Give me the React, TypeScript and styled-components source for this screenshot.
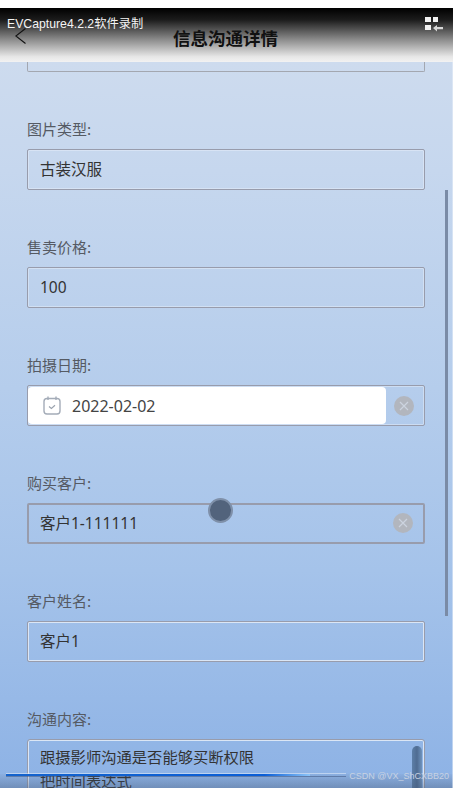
import { createGlobalStyle } from "styled-components";
import styled from "styled-components";

const GlobalStyle = createGlobalStyle`
	html, body {
		margin: 0;
		padding: 0;
		background: #fff;
	}
	* {
		box-sizing: border-box;
	}
`;

function CalendarIcon() {
	return (
		<svg width="18" height="19" viewBox="0 0 18 19" fill="none" stroke="#a4acb8" strokeWidth="1.4">
			<rect x="1" y="2.5" width="16" height="15.5" rx="3" />
			<path d="M5 0.5v3.5M13 0.5v3.5" />
			<path d="M6 10.5l2.4 2 3.6-3.2" stroke="#9aa2ae" strokeWidth="1.2" />
		</svg>
	);
}

function ClearIcon() {
	return (
		<ClearCircle>
			<svg width="10" height="10" viewBox="0 0 10 10" stroke="#ccd3df" strokeWidth="1.2">
				<path d="M1 1l8 8M9 1l-8 8" />
			</svg>
		</ClearCircle>
	);
}

function App() {
	return (
		<Page>
			<GlobalStyle />
			<Header>
				<BackIcon width="11" height="16" viewBox="0 0 11 16" fill="none" stroke="#111" strokeWidth="1.1">
					<path d="M10.5 0.5L0.8 8l9.7 7.5" />
				</BackIcon>
				<Title>信息沟通详情</Title>
				<RecorderText>EVCapture4.2.2软件录制</RecorderText>
				<RecorderIcon width="18" height="16" viewBox="0 0 18 16" fill="#f2f2f2">
					<rect x="0" y="0" width="6" height="5" />
					<rect x="8" y="0" width="5" height="5" />
					<rect x="0" y="8" width="6" height="5" />
					<path fill="#d8d8d8" d="M8 11L12 8v2h6v2.2h-6v2.4z" />
				</RecorderIcon>
			</Header>
			<Content>
				<CutOffBox />
				<Field>
					<Label>图片类型:</Label>
					<InputBox>古装汉服</InputBox>
				</Field>
				<Field>
					<Label>售卖价格:</Label>
					<InputBox>100</InputBox>
				</Field>
				<Field>
					<Label>拍摄日期:</Label>
					<InputBox $variant="date">
						<DateValue>
							<CalendarIcon />
							<span>2022-02-02</span>
						</DateValue>
						<ClearIcon />
					</InputBox>
				</Field>
				<Field>
					<Label>购买客户:</Label>
					<InputBox $variant="focus">
						<ValueText>客户1-111111</ValueText>
						<ClearIcon />
					</InputBox>
				</Field>
				<Field>
					<Label>客户姓名:</Label>
					<InputBox $variant="light">客户1</InputBox>
				</Field>
				<Field>
					<Label>沟通内容:</Label>
					<TextArea>
						<p>跟摄影师沟通是否能够买断权限</p>
						<p>把时间表达式</p>
					</TextArea>
				</Field>
			</Content>
			<PageScrollbar />
			<TextScrollbar />
			<TouchDot />
			<BottomShade />
			<ProgressTrack>
				<ProgressFill />
			</ProgressTrack>
			<Watermark>CSDN @VX_ShCXBB20</Watermark>
			<EdgeLine />
		</Page>
	);
}
export default App;

const Page = styled.div`
	position: relative;
	width: 453px;
	height: 788px;
	overflow: hidden;
	padding-top: 8px;
	background: #fff;
	font-family: "Noto Sans", "Noto Sans CJK SC", sans-serif;
`;
const Header = styled.div`
	position: relative;
	height: 54px;
	display: flex;
	align-items: center;
	justify-content: center;
	background: linear-gradient(to bottom, #000 0%, #1c1c1c 22%, #8a8a8a 58%, #e6e6e6 90%, #f2f2f2 100%);
`;
const Title = styled.div`
	margin: 5px 2px 0 0;
	font-size: 17.5px;
	font-weight: 700;
	color: #111;
	font-family: "Noto Sans CJK SC", sans-serif;
`;
const BackIcon = styled.svg`
	position: absolute;
	left: 15px;
	top: 20px;
`;
const RecorderText = styled.div`
	position: absolute;
	left: 7px;
	top: 8px;
	font-size: 12.25px;
	line-height: 17px;
	color: #f4f4f4;
	font-family: "Liberation Sans", "Noto Sans CJK SC", sans-serif;
`;
const RecorderIcon = styled.svg`
	position: absolute;
	left: 425px;
	top: 9px;
`;
const Content = styled.div`
	height: 726px;
	overflow: hidden;
	padding: 0 28px 0 27px;
	background: linear-gradient(to bottom, #cddbee 0%, #c6d7ee 15%, #b5cdec 45%, #a5c3ea 70%, #8db2e5 100%);
`;
const CutOffBox = styled.div`
	height: 10px;
	border: 1px solid #a3a7b0;
	border-top: none;
	border-radius: 0 0 2px 2px;
`;
const Field = styled.div`
	margin-top: 47px;
`;
const Label = styled.div`
	height: 20px;
	margin-bottom: 10px;
	font-size: 15px;
	line-height: 20px;
	color: #555a63;
	font-family: "Noto Sans CJK SC", sans-serif;
`;
const InputBox = styled.div<{ $variant?: "date" | "focus" | "light" }>`
	height: 41px;
	display: flex;
	align-items: center;
	justify-content: space-between;
	padding: ${(p) => (p.$variant === "date" ? "1px 10px 1px 0" : p.$variant === "focus" ? "0 10px 2px 11px" : "0 10px 2px 12px")};
	font-size: 15.5px;
	color: #333;
	font-family: "Noto Sans", "Noto Sans CJK SC", sans-serif;
	border: ${(p) => (p.$variant === "focus" ? "2px" : "1px")} solid #989cac;
	border-radius: 2px;
	box-shadow: ${(p) => (p.$variant === "light" ? "inset 0 0 0 1px #dbe6f5" : p.$variant === "focus" ? "none" : "inset 0 0 0 1px rgba(235, 242, 250, 0.45)")};
`;
const ValueText = styled.span`
	white-space: nowrap;
`;
const DateValue = styled.div`
	width: 358px;
	height: 37px;
	display: flex;
	align-items: center;
	gap: 11px;
	padding-left: 15px;
	border-radius: 4px;
	background: #fff;
	font-size: 16px;
	font-family: "Noto Sans", sans-serif;
	color: #444;
`;
const ClearCircle = styled.div`
	width: 20px;
	height: 20px;
	display: flex;
	align-items: center;
	justify-content: center;
	border-radius: 50%;
	background: #b2b6be;
`;
const TextArea = styled.div`
	height: 60px;
	padding: 4px 12px;
	border: 1px solid #989cac;
	border-radius: 3px;
	box-shadow: inset 0 0 0 1px #dbe6f5;
	font-size: 15.3px;
	line-height: 24px;
	color: #333;
	font-family: "Noto Sans CJK SC", sans-serif;
	p {
		margin: 0;
	}
`;
const PageScrollbar = styled.div`
	position: absolute;
	left: 445px;
	top: 190px;
	width: 3px;
	height: 426px;
	background: #7a8ba6;
`;
const TextScrollbar = styled.div`
	position: absolute;
	left: 412px;
	top: 746px;
	width: 10px;
	height: 50px;
	border-radius: 5px;
	background: linear-gradient(to right, #5d7fa8, #4f6c92 50%, #6f93bd);
`;
const TouchDot = styled.div`
	position: absolute;
	left: 208px;
	top: 498px;
	width: 25px;
	height: 25px;
	border-radius: 50%;
	background: #52637c;
	border: 2px solid #7f90a9;
`;
const BottomShade = styled.div`
	position: absolute;
	left: 0;
	right: 0;
	bottom: 0;
	height: 14px;
	background: linear-gradient(to bottom, rgba(70, 90, 120, 0.05), rgba(70, 90, 120, 0.4));
`;
const ProgressTrack = styled.div`
	position: absolute;
	left: 6px;
	top: 773px;
	width: 340px;
	height: 4px;
	border-top: 1px solid rgba(230, 238, 250, 0.55);
	border-bottom: 1px solid rgba(60, 80, 120, 0.5);
`;
const ProgressFill = styled.div`
	width: 304px;
	height: 2px;
	background: linear-gradient(to right, #1463cc 0%, #0a5ed6 85%, #8cc4f8 100%);
`;
const Watermark = styled.div`
	position: absolute;
	right: 4px;
	top: 770px;
	font-size: 9px;
	line-height: 12px;
	color: #c8d2e2;
	font-family: "Liberation Sans", sans-serif;
`;
const EdgeLine = styled.div`
	position: absolute;
	right: 0;
	top: 62px;
	bottom: 0;
	width: 1px;
	background: rgba(235, 242, 250, 0.5);
`;
